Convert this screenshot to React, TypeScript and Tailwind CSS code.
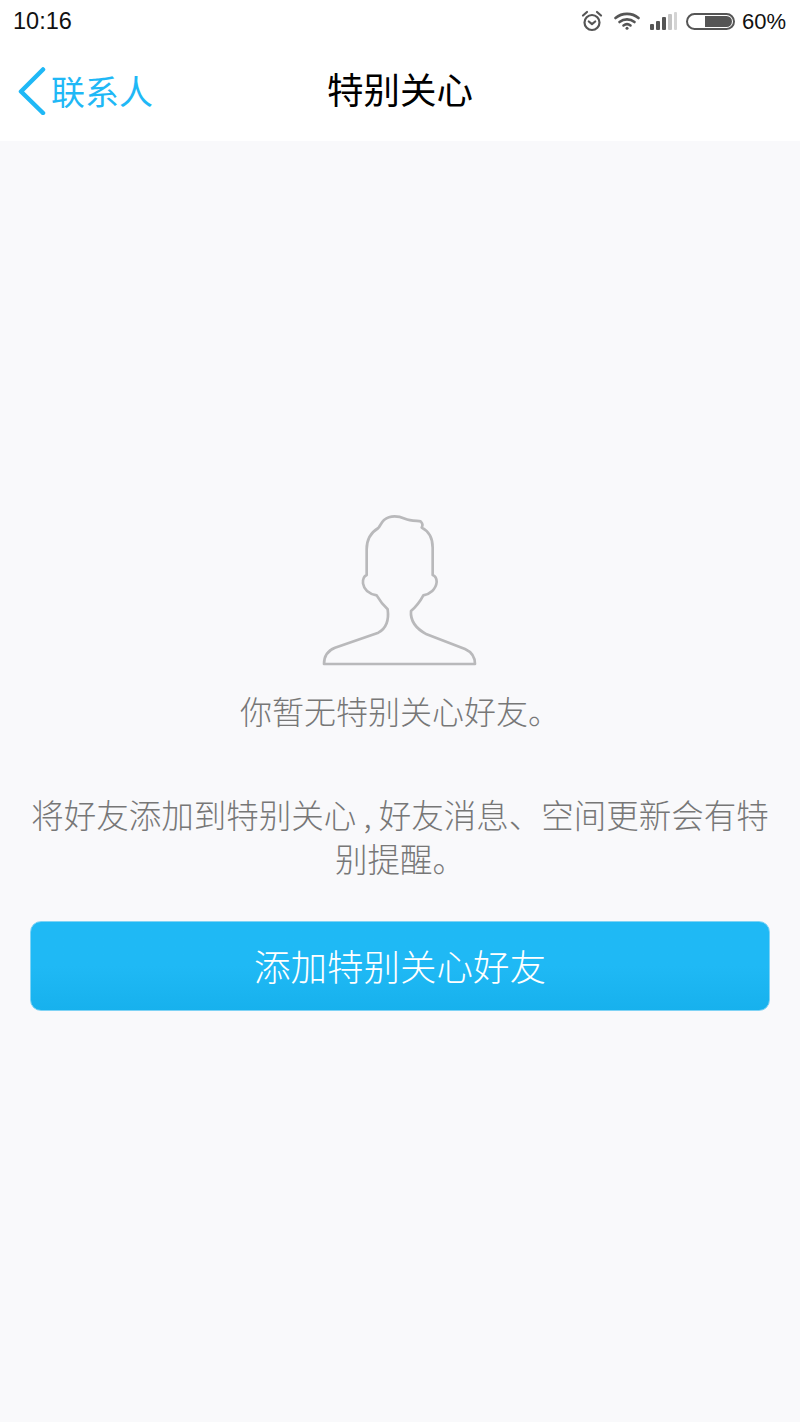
const cjk = "font-['Noto_Sans_CJK_SC','Noto_Sans',sans-serif]";

// status bar glyphs
const AlarmIcon = () => (
  <svg width="22" height="22" viewBox="0 0 22 22" fill="none" stroke="#555" strokeWidth="2.200" strokeLinecap="round" strokeLinejoin="round">
    <circle cx="11" cy="12.500" r="7.500" />
    <path d="M7.800 11.500l3.200 2.600 3.200-2.600" />
    <path d="M2 5.500L6 2M20 5.500L16 2" />
  </svg>
);

const WifiIcon = () => (
  <svg width="26" height="18" viewBox="0 0 26 18" fill="none" stroke="#555" strokeWidth="2.600" strokeLinecap="round">
    <path d="M1.500 6C8 .5 18 .5 24.500 6" />
    <path d="M5.500 10C10 6.500 16 6.500 20.500 10" />
    <path d="M9.500 13.500C11.500 12 14.500 12 16.500 13.500" />
    <circle cx="13" cy="16.300" r="1.500" fill="#555" stroke="none" />
  </svg>
);

const SignalIcon = () => (
  <div className="flex items-end gap-[2px] h-[18px]">
    <div className="w-[4px] h-[6px] rounded-[1px] bg-[#555]" />
    <div className="w-[4px] h-[9px] rounded-[1px] bg-[#555]" />
    <div className="w-[4px] h-[13px] rounded-[1px] bg-[#555]" />
    <div className="w-[4px] h-[16px] rounded-[1px] bg-[#c4c4c4]" />
    <div className="w-[3px] h-[18px] rounded-[1px] bg-[#d4d4d4]" />
  </div>
);

const BatteryIcon = () => (
  <div className="w-[49px] h-[17px] rounded-full border-2 border-[#555] flex justify-end p-[1px]">
    <div className="w-[27px] h-full rounded-r-full rounded-l-[2px] bg-[#555]" />
  </div>
);

const PersonOutline = () => (
  <svg width="180" height="170" viewBox="0 0 540 510" fill="none" stroke="#b9b9bb" strokeWidth="8" strokeLinejoin="round" className="block">
    <path d="M42 474H495C495 455 485 438 465 429L350 385C322 370 300 350 303 315C318 302 330 287 340 268C360 264 378 250 380 228C380 218 376 210 368 207V125C368 95 355 75 335 65C338 60 338 52 332 46C315 44 300 44 285 38C265 30 240 28 222 42C215 48 210 60 205 66C185 78 170 95 170 130V207C160 212 158 222 159 232C162 252 180 264 200 268C210 285 220 298 233 310C237 340 232 365 205 380L75 425C52 434 42 450 42 474Z" />
  </svg>
);

export default function App() {
  return (
    <div className={`w-[800px] h-[1422px] flex flex-col bg-[#f9f9fb] overflow-hidden ${cjk}`}>
      <header className="h-[141px] bg-white shrink-0">
        <div className="h-[42px] flex items-center justify-between pl-[13px] pr-[14px] font-['Liberation_Sans',sans-serif] text-[#111]">
          <span className="text-[23.500px] leading-none translate-y-[1px]">10:16</span>
          <div className="flex items-center">
            <AlarmIcon />
            <div className="ml-[11px]"><WifiIcon /></div>
            <div className="ml-[10px]"><SignalIcon /></div>
            <div className="ml-[9px]"><BatteryIcon /></div>
            <span className="ml-[7px] text-[22px] leading-none translate-y-[1px]">60%</span>
          </div>
        </div>
        <nav className="relative h-[99px] flex items-center justify-center">
          <div className="absolute left-[18px] top-[25px] flex items-center">
            <svg width="28" height="48" viewBox="0 0 28 48" fill="none" stroke="#1fb8f6" strokeWidth="4.500" strokeLinecap="round" strokeLinejoin="round">
              <path d="M25 2.500L3 24.500 25 46" />
            </svg>
            <span className="ml-[5px] text-[34px] leading-none text-[#1fb8f6]">联系人</span>
          </div>
          <h1 className="text-[36.500px] leading-none font-normal text-black -translate-y-[2px]">特别关心</h1>
        </nav>
      </header>
      <main className="flex flex-col items-center px-[20px] pt-[365px]">
        <PersonOutline />
        <p className="mt-[12px] text-[32px] leading-[44px] font-light text-[#777]">你暂无特别关心好友。</p>
        <p className="mt-[60px] text-[32.500px] leading-[44px] font-light text-[#777] text-center w-[760px]">
          将好友添加到特别关心 , 好友消息、空间更新会有特别提醒。
        </p>
        <button className="mt-[41px] w-[740px] h-[90px] rounded-[11px] border border-[#7fd3f5] bg-gradient-to-b from-[#1fb9f5] via-[#1fb9f5] to-[#17b1ed] text-white text-[36.500px] font-light leading-none">
          添加特别关心好友
        </button>
      </main>
    </div>
  );
}
